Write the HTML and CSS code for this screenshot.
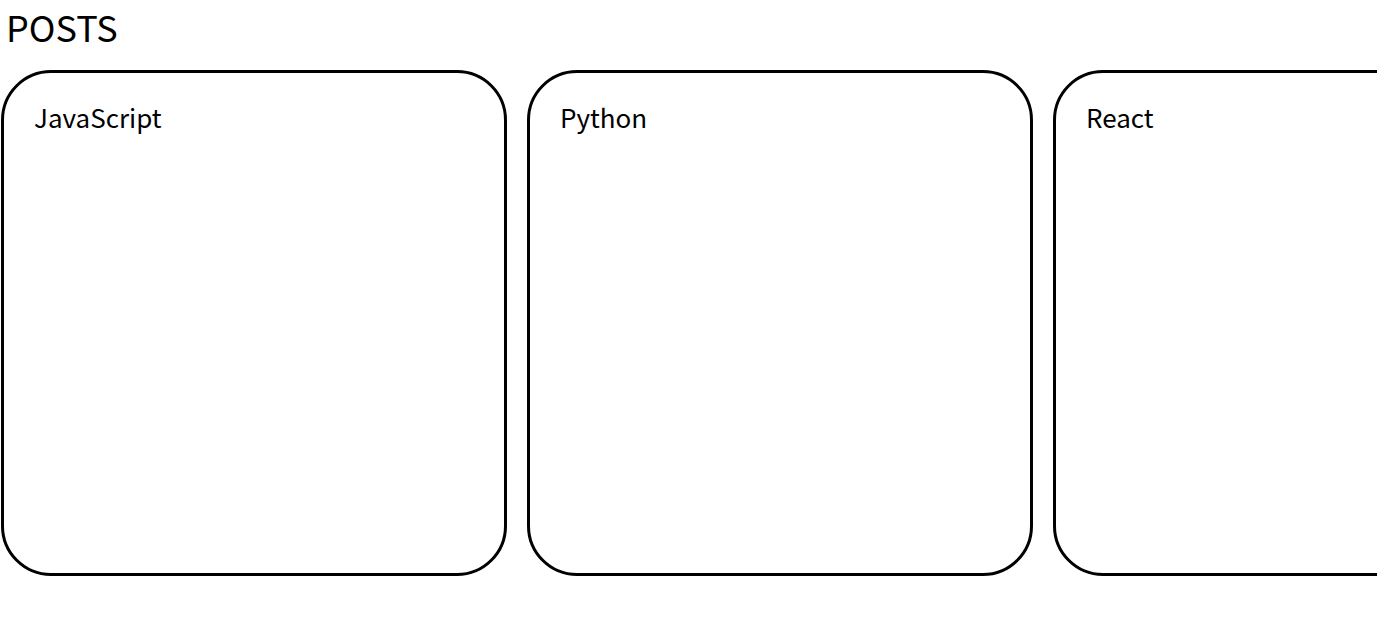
FILE: index.html
```html
<!DOCTYPE html>
<html lang="ko">
<head>
  <meta charset="UTF-8">
  <title>Posts</title>
  <link rel="stylesheet" href="styles.css">
</head>
<body>
  <h1 class="titulo">POSTS</h1>
  <div class="lista">
    <div class="tarjeta">JavaScript</div>
    <div class="tarjeta">Python</div>
    <div class="tarjeta">React</div>
  </div>
</body>
</html>
```

FILE: styles.css
```css
body {
  margin: 0;
  font-family: "Noto Sans CJK KR", "Noto Sans", sans-serif;
  color: #000;
  background: #fff;
  overflow: hidden;
}

.titulo {
  margin: 0;
  padding: 1px 0 0 6px;
  font-size: 36px;
  font-weight: normal;
  line-height: 50px;
}

.lista {
  display: flex;
  gap: 20px;
  padding: 19px 0 0 1px;
}

.tarjeta {
  flex: 0 0 auto;
  width: 470px;
  height: 500px;
  border: 3px solid #000;
  border-radius: 50px;
  padding: 0 0 0 30px;
  font-size: 26px;
  line-height: 88px;
}
```
